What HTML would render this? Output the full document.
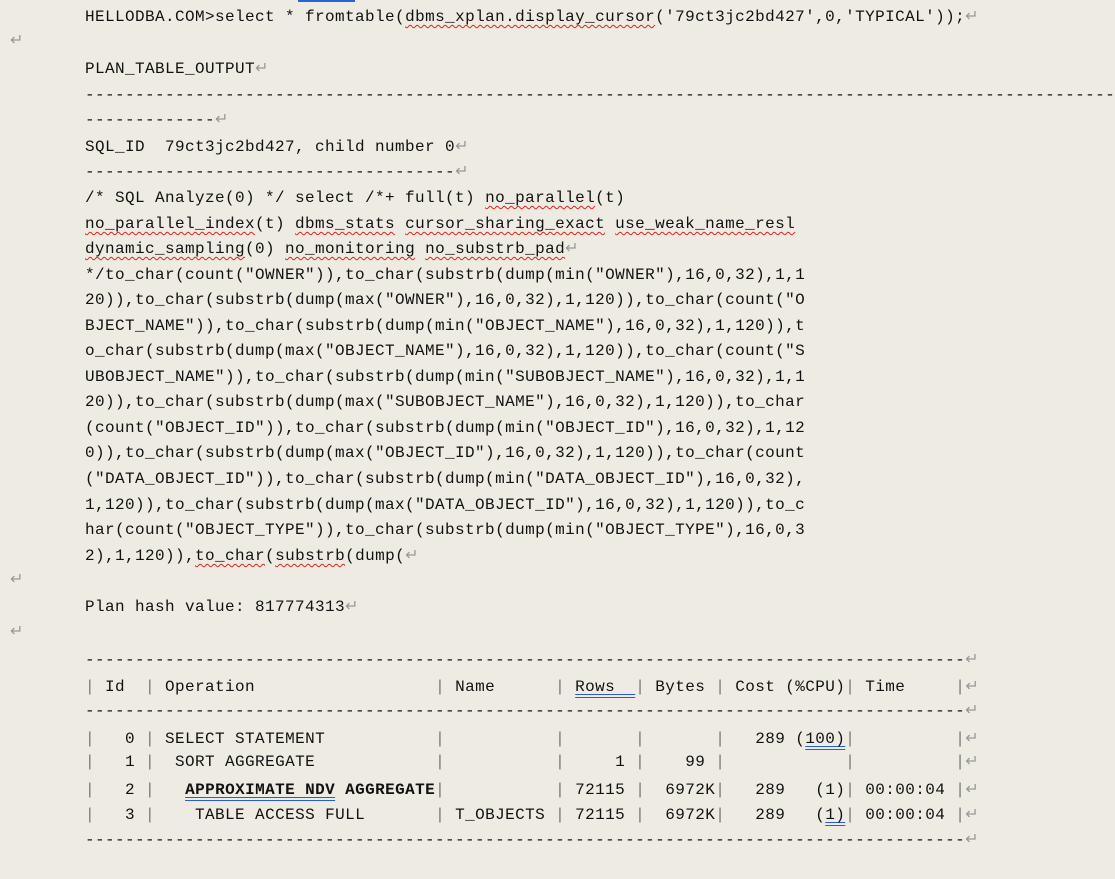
<!DOCTYPE html>
<html><head><meta charset="utf-8"><style>
html,body{margin:0;padding:0}
body{width:1115px;height:879px;background:#eeece2;position:relative;overflow:hidden;font-family:"Liberation Mono","Noto Sans CJK SC",monospace;font-size:16px;letter-spacing:0.4px;color:#111}
.l{position:absolute;left:85px;white-space:pre;line-height:26px;height:26px}
.r{color:#999}
.w{text-decoration:underline wavy #d22;text-decoration-thickness:1px;text-underline-offset:3px}
.b{text-decoration:underline double #2a5bd7;text-underline-offset:3px}
.m{position:absolute;left:10px;color:#999;line-height:26px}
.p{color:#777}
</style></head><body>
<div style="position:absolute;left:298px;top:0;width:57px;height:2px;background:#2a63d9"></div>
<div class="l" style="top:4px">HELLODBA.COM&gt;select * fromtable(<span class="w">dbms_xplan.display_cursor</span>('79ct3jc2bd427',0,'TYPICAL'));<span class="r">↵</span></div>
<div class="m" style="top:28px">↵</div>
<div class="l" style="top:56px">PLAN_TABLE_OUTPUT<span class="r">↵</span></div>
<div class="l" style="top:82px">------------------------------------------------------------------------------------------------------------</div>
<div class="l" style="top:107px">-------------<span class="r">↵</span></div>
<div class="l" style="top:134px">SQL_ID  79ct3jc2bd427, child number 0<span class="r">↵</span></div>
<div class="l" style="top:159px">-------------------------------------<span class="r">↵</span></div>
<div class="l" style="top:185px">/* SQL Analyze(0) */ select /*+ full(t) <span class="w">no_parallel</span>(t)</div>
<div class="l" style="top:211px"><span class="w">no_parallel_index</span>(t) <span class="w">dbms_stats</span> <span class="w">cursor_sharing_exact</span> <span class="w">use_weak_name_resl</span></div>
<div class="l" style="top:236px"><span class="w">dynamic_sampling</span>(0) <span class="w">no_monitoring</span> <span class="w">no_substrb_pad</span><span class="r">↵</span></div>
<div class="l" style="top:262px">*/to_char(count("OWNER")),to_char(substrb(dump(min("OWNER"),16,0,32),1,1</div>
<div class="l" style="top:287px">20)),to_char(substrb(dump(max("OWNER"),16,0,32),1,120)),to_char(count("O</div>
<div class="l" style="top:313px">BJECT_NAME")),to_char(substrb(dump(min("OBJECT_NAME"),16,0,32),1,120)),t</div>
<div class="l" style="top:338px">o_char(substrb(dump(max("OBJECT_NAME"),16,0,32),1,120)),to_char(count("S</div>
<div class="l" style="top:364px">UBOBJECT_NAME")),to_char(substrb(dump(min("SUBOBJECT_NAME"),16,0,32),1,1</div>
<div class="l" style="top:389px">20)),to_char(substrb(dump(max("SUBOBJECT_NAME"),16,0,32),1,120)),to_char</div>
<div class="l" style="top:415px">(count("OBJECT_ID")),to_char(substrb(dump(min("OBJECT_ID"),16,0,32),1,12</div>
<div class="l" style="top:440px">0)),to_char(substrb(dump(max("OBJECT_ID"),16,0,32),1,120)),to_char(count</div>
<div class="l" style="top:466px">("DATA_OBJECT_ID")),to_char(substrb(dump(min("DATA_OBJECT_ID"),16,0,32),</div>
<div class="l" style="top:492px">1,120)),to_char(substrb(dump(max("DATA_OBJECT_ID"),16,0,32),1,120)),to_c</div>
<div class="l" style="top:517px">har(count("OBJECT_TYPE")),to_char(substrb(dump(min("OBJECT_TYPE"),16,0,3</div>
<div class="l" style="top:543px">2),1,120)),<span class="w">to_char</span>(<span class="w">substrb</span>(dump(<span class="r">↵</span></div>
<div class="m" style="top:567px">↵</div>
<div class="l" style="top:594px">Plan hash value: 817774313<span class="r">↵</span></div>
<div class="m" style="top:619px">↵</div>
<div class="l" style="top:647px">----------------------------------------------------------------------------------------<span class="r">↵</span></div>
<div class="l" style="top:674px"><span class="p">|</span> Id  <span class="p">|</span> Operation                  <span class="p">|</span> Name      <span class="p">|</span> <span class="b">Rows  </span><span class="p">|</span> Bytes <span class="p">|</span> Cost (%CPU)<span class="p">|</span> Time     <span class="p">|</span><span class="r">↵</span></div>
<div class="l" style="top:698px">----------------------------------------------------------------------------------------<span class="r">↵</span></div>
<div class="l" style="top:726px"><span class="p">|</span>   0 <span class="p">|</span> SELECT STATEMENT           <span class="p">|</span>           <span class="p">|</span>       <span class="p">|</span>       <span class="p">|</span>   289 (<span class="b">100)</span><span class="p">|</span>          <span class="p">|</span><span class="r">↵</span></div>
<div class="l" style="top:749px"><span class="p">|</span>   1 <span class="p">|</span>  SORT AGGREGATE            <span class="p">|</span>           <span class="p">|</span>     1 <span class="p">|</span>    99 <span class="p">|</span>            <span class="p">|</span>          <span class="p">|</span><span class="r">↵</span></div>
<div class="l" style="top:777px"><span class="p">|</span>   2 <span class="p">|</span>   <b><span class="b">APPROXIMATE NDV</span> AGGREGATE</b><span class="p">|</span>           <span class="p">|</span> 72115 <span class="p">|</span>  6972K<span class="p">|</span>   289   (1)<span class="p">|</span> 00:00:04 <span class="p">|</span><span class="r">↵</span></div>
<div class="l" style="top:802px"><span class="p">|</span>   3 <span class="p">|</span>    TABLE ACCESS FULL       <span class="p">|</span> T_OBJECTS <span class="p">|</span> 72115 <span class="p">|</span>  6972K<span class="p">|</span>   289   (<span class="b">1)</span><span class="p">|</span> 00:00:04 <span class="p">|</span><span class="r">↵</span></div>
<div class="l" style="top:827px">----------------------------------------------------------------------------------------<span class="r">↵</span></div>
</body></html>
